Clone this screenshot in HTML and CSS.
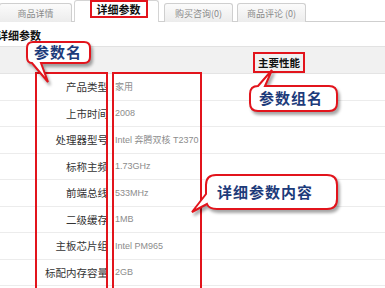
FILE: index.html
```html
<!DOCTYPE html>
<html lang="zh-CN">
<head>
<meta charset="utf-8">
<title>详细参数</title>
<link rel="stylesheet" href="styles.css">
</head>
<body>
<div class="page">
  <ul class="tabs">
    <li class="tab t1">商品详情</li>
    <li class="tab t2 active"><span class="mark mark-tab">详细参数</span></li>
    <li class="tab t3">购买咨询(0)</li>
    <li class="tab t4">商品评论 (0)</li>
  </ul>
  <h3 class="title">详细参数</h3>
  <table class="params">
    <colgroup><col class="col-k"><col class="col-v"></colgroup>
    <tr class="group"><th colspan="2"><span class="mark mark-group">主要性能</span></th></tr>
    <tr><td class="k">产品类型</td><td class="v">家用</td></tr>
    <tr><td class="k">上市时间</td><td class="v">2008</td></tr>
    <tr><td class="k">处理器型号</td><td class="v">Intel 奔腾双核 T2370</td></tr>
    <tr><td class="k">标称主频</td><td class="v">1.73GHz</td></tr>
    <tr><td class="k">前端总线</td><td class="v">533MHz</td></tr>
    <tr><td class="k">二级缓存</td><td class="v">1MB</td></tr>
    <tr><td class="k">主板芯片组</td><td class="v">Intel PM965</td></tr>
    <tr><td class="k">标配内存容量</td><td class="v">2GB</td></tr>
    <tr><td class="k">&nbsp;</td><td class="v">&nbsp;</td></tr>
  </table>

  <div class="redbox box-keys"></div>
  <div class="redbox box-vals"></div>

  <svg class="bubbles" width="385" height="288" viewBox="0 0 385 288" aria-hidden="true">
    <path d="M33,42 H84 Q90,42 90,48 V57 Q90,63 84,63 H41 L48,82 L32,63 Q27,63 27,57 V48 Q27,42 33,42 Z"/>
    <path d="M258,86 L272,70 L265,86 H329 Q337,86 337,94 V103 Q337,111 329,111 H258 Q250,111 250,103 V94 Q250,86 258,86 Z"/>
    <path d="M216,175 H327 Q337,175 337,185 V199 Q337,209 327,209 H217 Q209,209 207,204 L192,212 L206,194 V185 Q206,175 216,175 Z"/>
  </svg>
  <span class="bubble-text bt1">参数名</span>
  <span class="bubble-text bt2">参数组名</span>
  <span class="bubble-text bt3">详细参数内容</span>
</div>
</body>
</html>
```
FILE: styles.css
```css
html, body {
  margin: 0;
  padding: 0;
  background: #fff;
  overflow: hidden;
}
body {
  font-family: "Noto Sans CJK SC", "Liberation Sans", sans-serif;
  color: #333;
}
.page {
  position: relative;
  width: 385px;
  height: 288px;
  overflow: hidden;
}

/* tabs */
.tabs {
  list-style: none;
  margin: 0;
  padding: 0;
  height: 21px;
  border-bottom: 1px solid #cfcfcf;
  display: flex;
  align-items: flex-end;
}
.tab {
  box-sizing: border-box;
  height: 19px;
  border: 1px solid #cfcfcf;
  border-bottom: none;
  border-radius: 3px 3px 0 0;
  background: linear-gradient(#fbfbfb, #ececec);
  color: #8a8a8a;
  font-size: 9px;
  display: flex;
  align-items: center;
  justify-content: center;
  margin-bottom: -1px;
}
.t1 { width: 73px; margin-left: -1px; }
.t2 {
  width: 85px;
  height: 22px;
  margin-left: 2px;
  background: #fff;
  align-items: flex-start;
  padding-left: 4px;
  border-color: #d4d4d4;
}
.t3 { width: 69px; margin-left: 5px; }
.t4 { width: 69px; margin-left: 4px; }

.mark {
  border: 2px solid #e2141c;
  box-sizing: border-box;
}
.mark-tab {
  display: block;
  width: 58px;
  height: 18px;
  margin-top: -1px;
  font-size: 11px;
  font-weight: 700;
  color: #111;
  text-align: center;
  line-height: 14px;
}

.title {
  margin: 6px 0 0 -3px;
  font-size: 11px;
  font-weight: 700;
  color: #111;
  line-height: 14px;
  height: 18px;
}

/* params table */
.params {
  width: 100%;
  border-collapse: collapse;
  table-layout: fixed;
}
.col-k { width: 108px; }
.group th {
  height: 26px;
  padding: 0 0 0 253px;
  background: #f1f1f1;
  border-top: 1px solid #e2e2e2;
  border-bottom: 1px solid #e4e4e4;
  text-align: left;
  font-weight: 700;
}
.mark-group {
  display: inline-block;
  font-size: 10.5px;
  color: #111;
  padding: 0 3px;
  line-height: 17px;
  margin-top: 4px;
}
.params td {
  height: 25.5px;
  padding: 0;
  border-bottom: 1px solid #ececec;
  white-space: nowrap;
  overflow: hidden;
}
.k {
  text-align: right;
  font-size: 10.5px;
  color: #333;
}
.params td.v {
  padding-left: 7px;
  font-family: "Liberation Sans", "Noto Sans CJK SC", sans-serif;
  font-size: 9px;
  color: #8c8c8c;
}

/* annotation overlays */
.redbox {
  position: absolute;
  top: 72px;
  height: 260px;
  border: 2px solid #e2141c;
  box-sizing: border-box;
}
.box-keys { left: 35px; width: 73px; }
.box-vals { left: 112px; width: 90px; }

.bubbles {
  position: absolute;
  left: 0;
  top: 0;
}
.bubbles path {
  fill: #fff;
  stroke: #e2141c;
  stroke-width: 2;
  filter: drop-shadow(2px 3px 1.5px rgba(0, 0, 0, 0.35));
}
.bubble-text {
  position: absolute;
  font-size: 15px;
  font-weight: 700;
  letter-spacing: 1px;
  color: #1d3b7a;
  line-height: 18px;
  white-space: nowrap;
}
.bt1 { left: 34px; top: 43px; }
.bt2 { left: 259px; top: 89px; }
.bt3 { left: 217px; top: 183px; }
```
